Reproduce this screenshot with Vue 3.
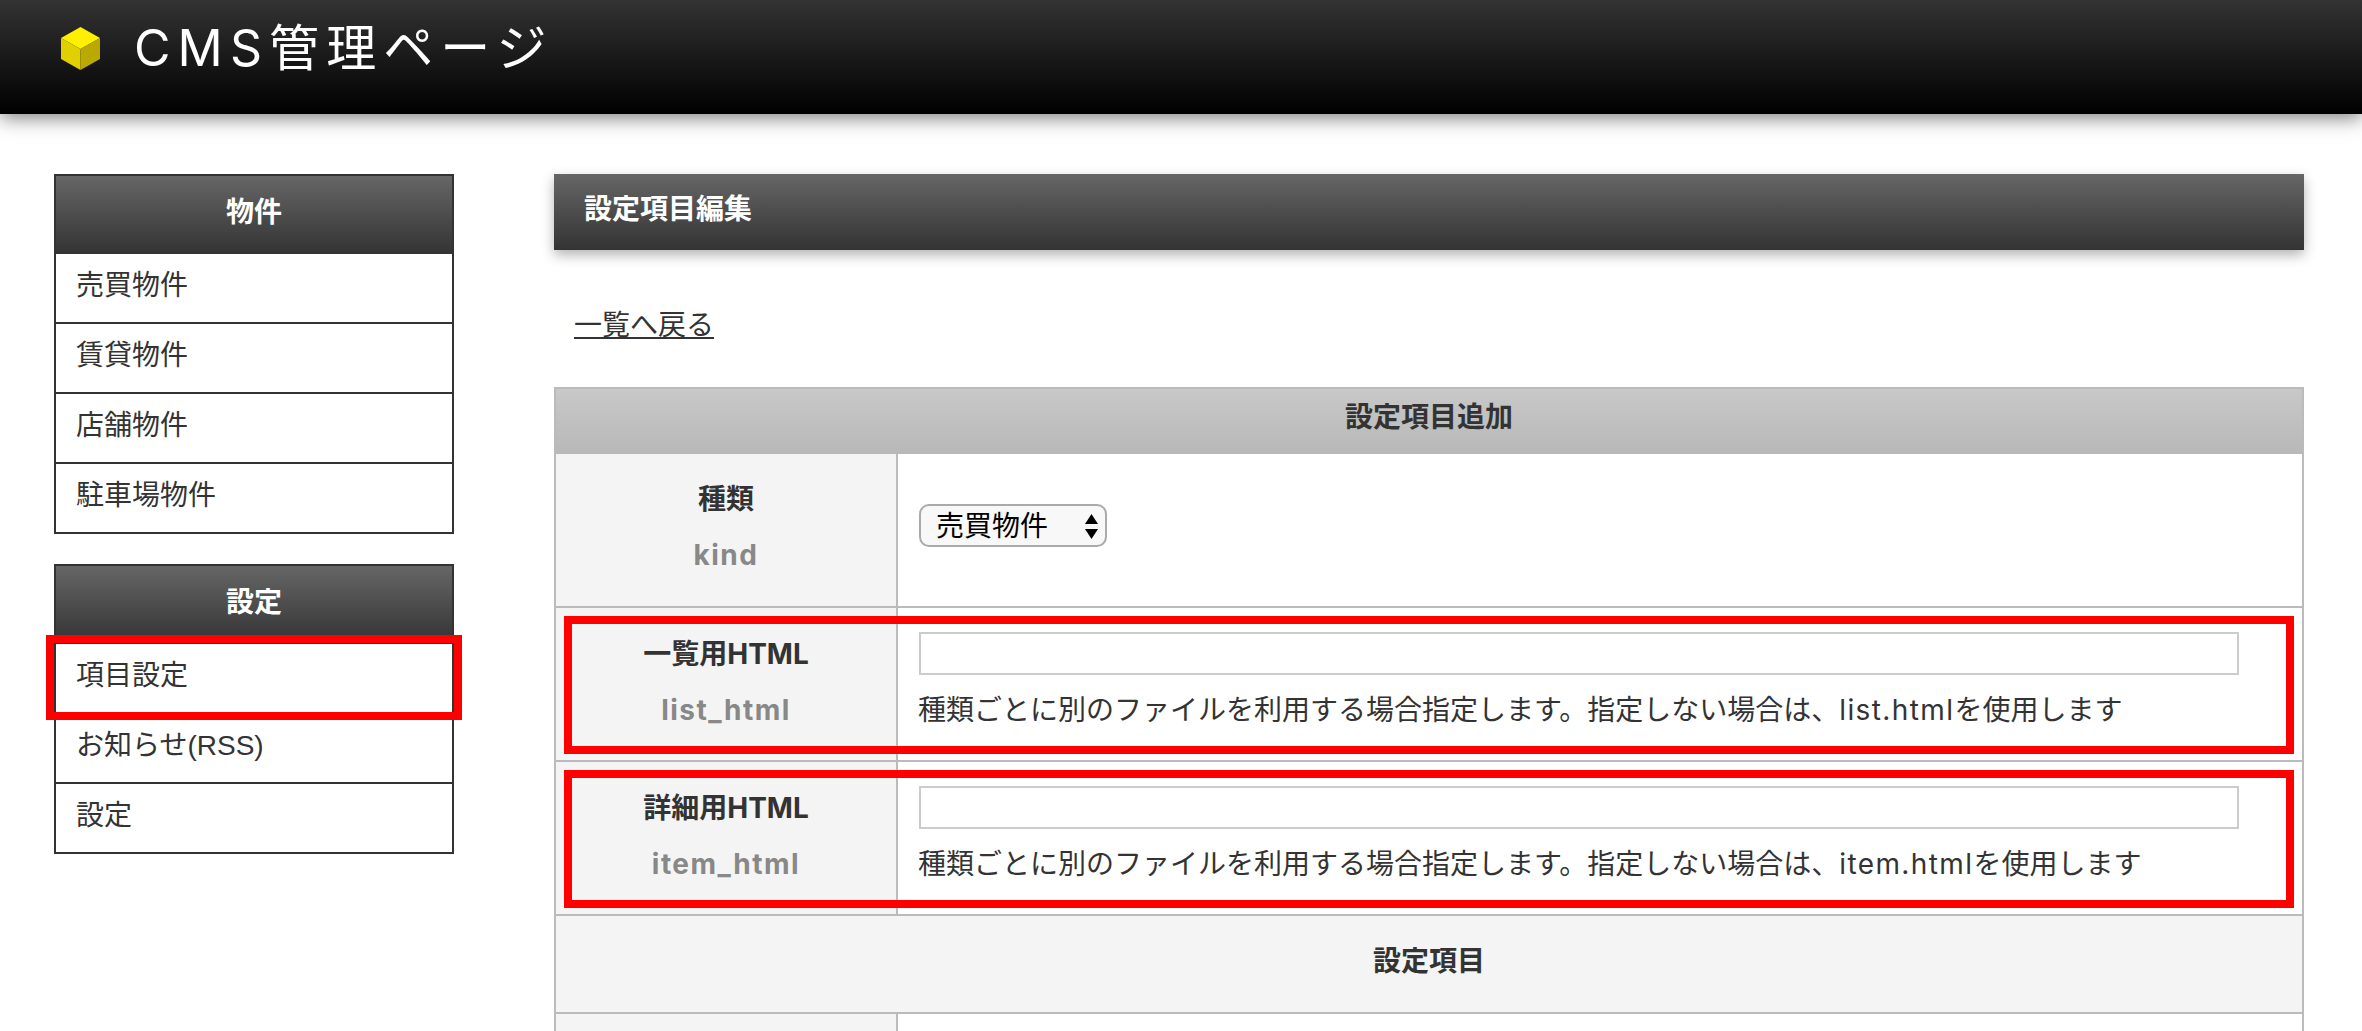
<template>
  <div class="page">
    <header class="topbar">
      <svg class="cube" width="39" height="43" viewBox="0 0 39 43">
        <polygon points="19.5,0 39,11 19.5,22 0,11" fill="#fff000" />
        <polygon points="0,11 19.5,22 19.5,43 0,32" fill="#e0d000" />
        <polygon points="39,11 19.5,22 19.5,43 39,32" fill="#baa900" />
      </svg>
      <h1 class="logo">CMS管理ページ</h1>
    </header>

    <div class="content">
      <aside class="sidebar">
        <section v-for="group in menu" :key="group.title" class="box">
          <h2 class="boxTitle">{{ group.title }}</h2>
          <a v-for="item in group.items" :key="item" :class="['boxItem', { marked: item === '項目設定' }]">{{ item }}</a>
        </section>
      </aside>

      <main class="main">
        <h2 class="pageTitle">設定項目編集</h2>
        <p class="back"><a>一覧へ戻る</a></p>

        <div class="form">
          <div class="headRow">設定項目追加</div>

          <div class="row kindRow">
            <div class="label">種類<span class="key">kind</span></div>
            <div class="value">
              <span class="selectWrap">
                <select class="select">
                  <option>売買物件</option>
                </select>
                <svg class="arrows" width="13" height="25" viewBox="0 0 13 25">
                  <polygon points="6.5,0 13,10 0,10" fill="#000" />
                  <polygon points="6.5,25 13,15 0,15" fill="#000" />
                </svg>
              </span>
            </div>
          </div>

          <div v-for="row in rows" :key="row.key" class="row fieldRow">
            <div class="label">{{ row.label }}<span class="key">{{ row.key }}</span></div>
            <div class="value">
              <input class="input" type="text" />
              <p class="help">
                種類ごとに別のファイルを利用する場合指定します。指定しない場合は、<span class="file">{{ row.file }}</span>を使用します
              </p>
            </div>
          </div>

          <div class="sectionRow">設定項目</div>

          <div class="row lastRow">
            <div class="label"></div>
            <div class="value"></div>
          </div>
        </div>
      </main>
    </div>
  </div>
</template>

<script setup>
const menu = [
  { title: "物件", items: ["売買物件", "賃貸物件", "店舗物件", "駐車場物件"] },
  { title: "設定", items: ["項目設定", "お知らせ(RSS)", "設定"] },
];

const rows = [
  { label: "一覧用HTML", key: "list_html", file: "list.html" },
  { label: "詳細用HTML", key: "item_html", file: "item.html" },
];
</script>

<style>
html,
body {
  margin: 0;
  background: #fff;
}
</style>

<style scoped>
.page {
  height: 100vh;
  overflow: hidden;
  font-family: Inter, "Noto Sans CJK JP", sans-serif;
  font-size: 28px;
  color: #333;
}

.topbar {
  display: flex;
  align-items: flex-start;
  height: 114px;
  padding-left: 61px;
  box-sizing: border-box;
  background: linear-gradient(#333, #000);
  box-shadow: 0 4px 18px rgba(0, 0, 0, 0.5);
}

.cube {
  margin-top: 27px;
}

.logo {
  margin: 12px 0 0 34px;
  font-size: 50px;
  line-height: 72px;
  font-weight: 400;
  letter-spacing: 7.1px;
  color: #fff;
}

.content {
  display: flex;
  gap: 100px;
  padding: 60px 58px 0 54px;
}

.sidebar {
  width: 400px;
  flex: none;
  display: flex;
  flex-direction: column;
  gap: 30px;
}

.box {
  border: 2px solid #333;
  border-bottom: 0;
}

.boxTitle {
  margin: 0;
  height: 78px;
  line-height: 72px;
  text-align: center;
  font-size: 28px;
  font-weight: 700;
  color: #fff;
  background: linear-gradient(#666, #333);
}

.boxItem {
  display: block;
  position: relative;
  height: 70px;
  box-sizing: border-box;
  padding-left: 20px;
  font-family: "Liberation Sans", "Noto Sans CJK JP", sans-serif;
  line-height: 64px;
  border-bottom: 2px solid #333;
}

.boxItem.marked::after {
  content: "";
  position: absolute;
  top: -9px;
  left: -10px;
  right: -10px;
  bottom: -8px;
  border: 8px solid #f00;
}

.main {
  flex: 1;
  min-width: 0;
}

.pageTitle {
  margin: 0;
  height: 76px;
  padding-left: 30px;
  line-height: 70px;
  font-size: 28px;
  font-weight: 700;
  color: #fff;
  background: linear-gradient(#666, #333);
  box-shadow: 0 5px 12px rgba(0, 0, 0, 0.3);
}

.back {
  margin: 47px 0 34px 20px;
  line-height: 56px;
}

.back a {
  text-decoration: underline;
}

.form {
  border: 2px solid #bbb;
  border-bottom: 0;
}

.headRow {
  height: 65px;
  line-height: 56px;
  text-align: center;
  font-weight: 700;
  background: linear-gradient(#c8c8c8, #b8b8b8);
}

.row {
  display: grid;
  grid-template-columns: 342px 1fr;
  height: 154px;
  box-sizing: border-box;
  position: relative;
  border-bottom: 2px solid #bbb;
}

.fieldRow::after {
  content: "";
  position: absolute;
  top: 8px;
  left: 8px;
  right: 8px;
  bottom: 6px;
  border: 8px solid #f00;
}

.label {
  padding-top: 17px;
  line-height: 56px;
  text-align: center;
  font-weight: 700;
  background: #f4f4f4;
  border-right: 2px solid #bbb;
}

.fieldRow .label {
  padding-top: 18px;
}

.key {
  display: block;
  color: #888;
  letter-spacing: 1.5px;
}

.value {
  padding: 24px 20px 0 21px;
}

.kindRow .value {
  padding-top: 50px;
}

.selectWrap {
  display: inline-block;
  position: relative;
  vertical-align: top;
}

.select {
  display: block;
  width: 188px;
  height: 43px;
  padding: 0 0 0 15px;
  appearance: none;
  border: 2px solid #aaa;
  border-radius: 10px;
  background: #f8f8f8;
  font-family: inherit;
  font-size: 28px;
  color: #000;
}

.arrows {
  position: absolute;
  top: 10px;
  right: 9px;
  pointer-events: none;
}

.input {
  display: block;
  width: 1320px;
  height: 43px;
  box-sizing: border-box;
  border: 2px solid #ccc;
  background: #fff;
}

.help {
  margin: 7px 0 0 -1px;
  line-height: 56px;
  white-space: nowrap;
}

.file {
  letter-spacing: 1.4px;
}

.sectionRow {
  height: 98px;
  box-sizing: border-box;
  padding-top: 17px;
  line-height: 56px;
  text-align: center;
  font-weight: 700;
  background: #f4f4f4;
  border-bottom: 2px solid #bbb;
}
</style>
